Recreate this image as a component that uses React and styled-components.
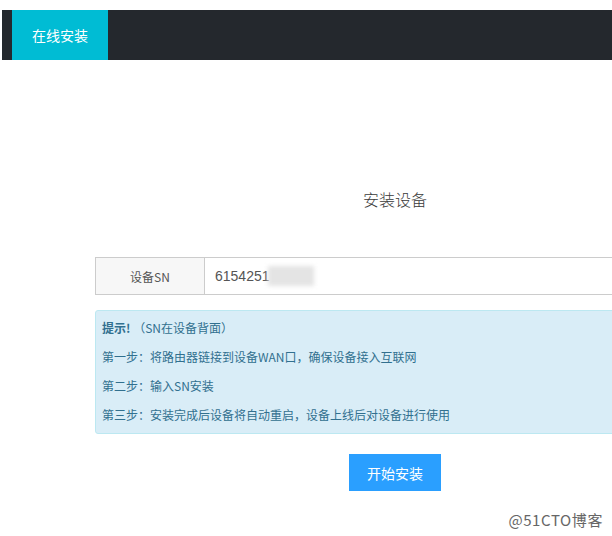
import styled, { createGlobalStyle } from "styled-components";

const GlobalStyle = createGlobalStyle`
  body {
    margin: 0;
    background: #fff;
    font-family: "Microsoft YaHei", "Noto Sans CJK SC", "Liberation Sans", sans-serif;
    color: #333;
    overflow: hidden;
  }
`;

const Page = styled.div`
  width: 612px;
  height: 536px;
  padding-top: 10px;
  box-sizing: border-box;
  position: relative;
  overflow: hidden;
`;

const TopBar = styled.div`
  margin-left: 2px;
  height: 50px;
  background: #24282d;
  display: flex;
  padding-left: 10px;
`;

const Tab = styled.div`
  width: 96px;
  background: #00bcd4;
  color: #fff;
  font-size: 14px;
  display: flex;
  align-items: center;
  justify-content: center;
`;

const Main = styled.div`
  width: 600px;
  margin-left: 95px;
  display: flex;
  flex-direction: column;
  align-items: center;
`;

const Title = styled.h3`
  margin: 128px 0 0;
  font-size: 16px;
  font-weight: 300;
  color: #3a3a3a;
  line-height: 22px;
`;

const InputGroup = styled.div`
  align-self: stretch;
  margin-top: 47px;
  display: flex;
  height: 38px;
  box-sizing: border-box;
  border: 1px solid #ccc;
`;

const Addon = styled.div`
  width: 108px;
  background: #f7f7f7;
  border-right: 1px solid #ccc;
  font-size: 12px;
  color: #555;
  display: flex;
  align-items: center;
  justify-content: center;
`;

const Field = styled.div`
  flex: 1;
  display: flex;
  align-items: center;
  padding-left: 10px;
  font-family: "Liberation Sans", sans-serif;
  font-size: 14px;
  color: #555;
`;

const Redact = styled.span`
  display: inline-block;
  width: 46px;
  height: 20px;
  margin-left: -2px;
  background: #e4e4e4;
  filter: blur(2px);
`;

const Alert = styled.div`
  align-self: stretch;
  margin-top: 15px;
  background: #d9edf7;
  border: 1px solid #bce8f1;
  border-radius: 3px;
  padding: 8px 6px 10px;
  color: #31708f;
  font-size: 12px;
`;

const Line = styled.p`
  margin: 0;
  line-height: 17px;
  & + & {
    margin-top: 12px;
  }
`;

const Strong = styled.b`
  font-weight: bold;
`;

const Button = styled.button`
  margin-top: 20px;
  width: 92px;
  height: 37px;
  border: none;
  background: #2a9fff;
  color: #fff;
  font-size: 14px;
  font-family: inherit;
  cursor: pointer;
`;

const Watermark = styled.div`
  position: absolute;
  right: 9px;
  bottom: 6px;
  font-size: 15px;
  color: #666;
  letter-spacing: 0.6px;
`;

export default function App() {
  return (
    <Page>
      <GlobalStyle />
      <TopBar>
        <Tab>在线安装</Tab>
      </TopBar>
      <Main>
        <Title>安装设备</Title>
        <InputGroup>
          <Addon>设备SN</Addon>
          <Field>
            6154251<Redact />
          </Field>
        </InputGroup>
        <Alert>
          <Line>
            <Strong>提示!</Strong> （SN在设备背面）
          </Line>
          <Line>第一步：将路由器链接到设备WAN口，确保设备接入互联网</Line>
          <Line>第二步：输入SN安装</Line>
          <Line>第三步：安装完成后设备将自动重启，设备上线后对设备进行使用</Line>
        </Alert>
        <Button>开始安装</Button>
      </Main>
      <Watermark>@51CTO博客</Watermark>
    </Page>
  );
}
